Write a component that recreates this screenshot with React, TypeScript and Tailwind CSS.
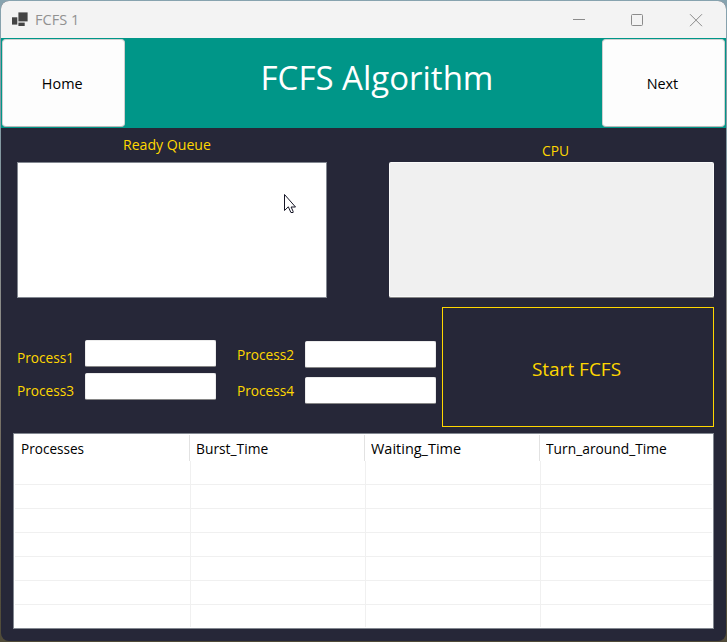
import type { ReactNode } from "react";

const COLUMNS = [
  { name: "Processes", scale: "scale-x-[0.905]" },
  { name: "Burst_Time", scale: "scale-x-[0.92]" },
  { name: "Waiting_Time", scale: "scale-x-[0.965]" },
  { name: "Turn_around_Time", scale: "scale-x-[0.92]" },
];
const ROWS = [0, 1, 2, 3, 4, 5, 6];

function Text({ children, className = "origin-left scale-x-[0.92]" }: { children: ReactNode; className?: string }) {
  return <span className={`block whitespace-nowrap text-[15px] leading-5 ${className}`}>{children}</span>;
}

function Field({ label, labelClass }: { label: string; labelClass: string }) {
  return (
    <div className="flex items-start">
      <div className={`w-[68px] shrink-0 text-[#ffd700] ${labelClass}`}>
        <Text className="origin-left scale-x-[0.91]">{label}</Text>
      </div>
      <div className="h-[27px] w-[131px] rounded-[2px] border border-[#ececec] border-b-[#868686] bg-white" />
    </div>
  );
}

function TitleBar() {
  return (
    <div className="flex h-[37px] items-center bg-[#f3f3f3]">
      <svg className="ml-[11px] h-[15px] w-[16px]" viewBox="0 0 16 15">
        <rect x="0" y="5.3" width="5.3" height="7.3" fill="#444" />
        <rect x="6.4" y="0.4" width="9.2" height="9" fill="#444" />
        <rect x="6.4" y="10.6" width="6.3" height="3.4" fill="#444" />
      </svg>
      <span className="mb-[2px] ml-[7px] origin-left scale-x-[0.97] whitespace-nowrap text-[15px] leading-5 text-[#919191]">
        FCFS 1
      </span>
      <svg className="ml-auto h-[14px] w-[131px]" viewBox="0 0 131 14" fill="none" stroke="#8b8b8b" strokeWidth="1">
        <path d="M0 6.5h12" />
        <rect x="58.5" y="1.5" width="11" height="11" rx="1" />
        <path d="M117 1.2l12 12M129 1.2l-12 12" />
      </svg>
      <div className="w-[22px]" />
    </div>
  );
}

function HeaderButton({ children }: { children: ReactNode }) {
  return (
    <button className="flex h-[88px] w-[123px] shrink-0 items-center justify-center rounded-[4px] border border-[#d0d0d0] border-b-[#b8b8b8] bg-[#fdfdfd] pr-[2px] text-black">
      <Text className="scale-x-[0.96]">{children}</Text>
    </button>
  );
}

export default function App() {
  return (
    <div className="h-[642px] w-[727px] overflow-hidden bg-[linear-gradient(180deg,#87a3af_0%,#8398a0_25%,#8d8780_55%,#5a5546_80%,#504b39_100%)] p-px font-['Open_Sans','Noto_Sans',sans-serif]">
      <div className="flex h-[640px] w-[725px] flex-col overflow-hidden rounded-[8px] bg-[#262738]">
        <TitleBar />
        <div className="flex h-[90px] items-start bg-[#009688] p-px">
          <HeaderButton>Home</HeaderButton>
          <h1 className="flex flex-1 justify-center pl-[27px] pt-[15px] text-[33px] font-normal leading-[48px] text-white">
            <span className="block whitespace-nowrap">FCFS Algorithm</span>
          </h1>
          <HeaderButton>Next</HeaderButton>
        </div>

        <div className="flex h-[170px] justify-between pl-4 pr-3">
          <div className="flex w-[310px] flex-col pt-[6px]">
            <div className="h-[28px] pl-[106px] text-[#ffd700]">
              <Text className="origin-left scale-x-[0.94]">Ready Queue</Text>
            </div>
            <div className="h-[136px] border border-[#828790] bg-white pl-[266px] pt-[31px]">
              <svg className="h-5 w-3" viewBox="0 0 12 20" fill="white" stroke="#151525" strokeWidth="1">
                <path d="M.5.5v16l3.8-3.7 2.6 5.7h2.2v-1.2l-2-4.3h4.4z" />
              </svg>
            </div>
          </div>
          <div className="flex w-[325px] flex-col pt-[12px]">
            <div className="h-[22px] pl-[153px] text-[#ffd700]">
              <Text>CPU</Text>
            </div>
            <div className="h-[136px] rounded-[2px] border-b border-[#868686] bg-[#fafafa] p-px">
              <div className="h-full bg-[#f0f0f0]" />
            </div>
          </div>
        </div>

        <div className="flex h-[135px] pl-4 pr-3 pt-[9px]">
          <div className="flex w-[220px] flex-col gap-[6px] pt-[33px]">
            <Field label="Process1" labelClass="pt-[7px]" />
            <Field label="Process3" labelClass="pt-[7px]" />
          </div>
          <div className="flex w-[205px] flex-col gap-[9px] pt-[34px]">
            <Field label="Process2" labelClass="pt-[3px]" />
            <Field label="Process4" labelClass="pt-[3px]" />
          </div>
          <button className="flex h-[120px] w-[272px] items-center justify-center border border-[#ffd700] pr-[3px] pt-1 text-[#ffd700]">
            <span className="block whitespace-nowrap text-[19px]">Start FCFS</span>
          </button>
        </div>

        <div className="ml-3 flex h-[196px] w-[701px] flex-col border border-[#828790] bg-white p-px">
          <div className="grid h-[26px] shrink-0 grid-cols-[175px_175px_175px_172px]">
            {COLUMNS.map(({ name, scale }, i) => (
              <div key={name} className={`pl-[6px] pt-[3px] text-black ${i < 3 ? "border-r border-[#e2e2e2]" : ""}`}>
                <Text className={`origin-left ${scale}`}>{name}</Text>
              </div>
            ))}
          </div>
          {ROWS.map((row) => (
            <div
              key={row}
              className={`grid grid-cols-[176px_175px_175px_171px] ${
                row < 6 ? "h-6 shrink-0 border-b border-[#f0f0f0]" : "flex-1"
              }`}
            >
              {COLUMNS.map(({ name }, i) => (
                <div key={name} className={i < 3 ? "border-r border-[#f0f0f0]" : ""} />
              ))}
            </div>
          ))}
        </div>
      </div>
    </div>
  );
}
